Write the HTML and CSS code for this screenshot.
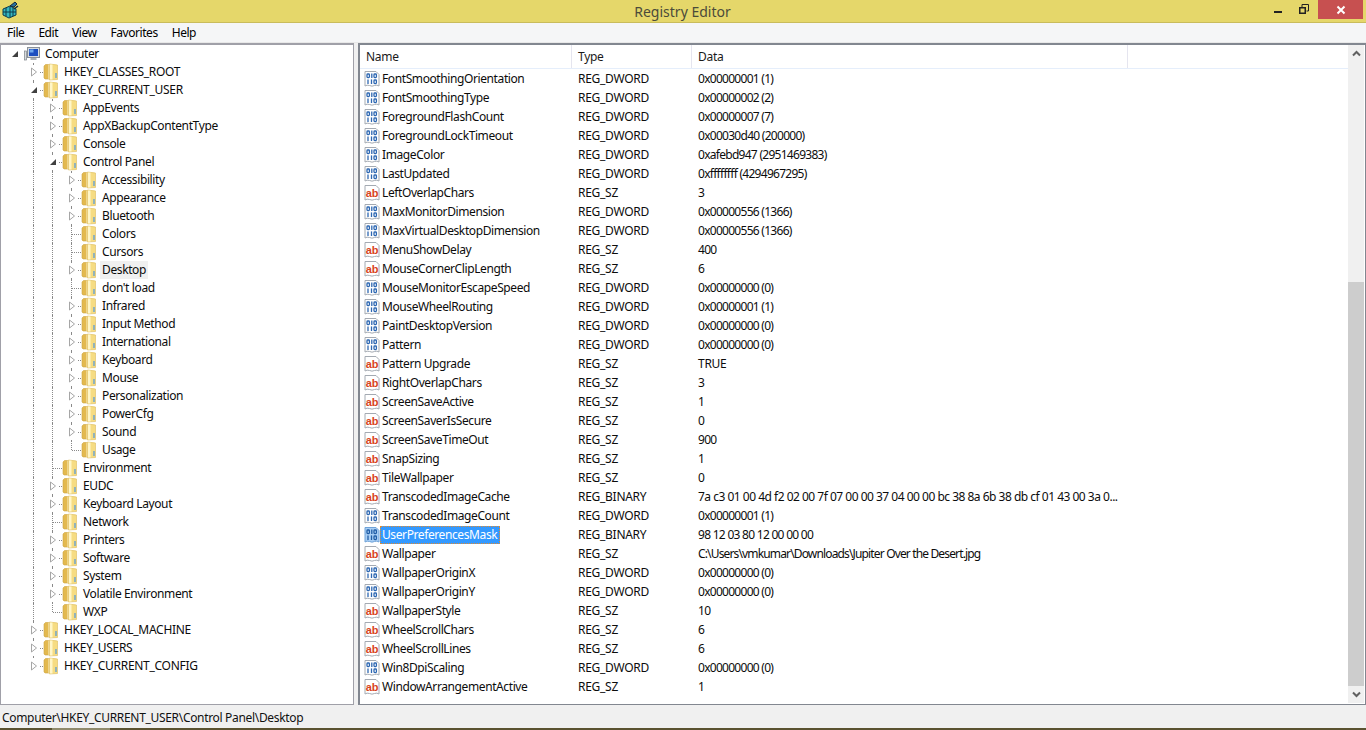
FILE: index.html
```html
<!DOCTYPE html>
<html lang="en">
<head>
<meta charset="utf-8">
<title>Registry Editor</title>
<link rel="stylesheet" href="styles.css">
</head>
<body>
<svg class="defs" width="0" height="0" aria-hidden="true">
  <symbol id="folder" viewBox="0 0 16 18">
    <path d="M1 3 L2.5 1.5 H6 V16 H2 L1 15 Z" fill="#e3b94f" stroke="#cfa543" stroke-width=".6"/>
    <path d="M5.5 1.5 L13.5 1 V15 L5.5 16 Z" fill="#fff7cf"/>
    <path d="M6.5 1 L14.5 2 V16.5 L6.5 17 Z" fill="#f6dc82" stroke="#dcbb5e" stroke-width=".6"/>
    <path d="M7 1.5 H9.5 V16.5 H7 Z" fill="#fff6c8"/>
    <path d="M13 10 v5" stroke="#4f97dc" stroke-width="1.2"/>
  </symbol>
  <symbol id="closed" viewBox="0 0 8 10"><path d="M1.5 1 L6.5 5 L1.5 9 Z" fill="#fff" stroke="#a6a6a6"/></symbol>
  <symbol id="open" viewBox="0 0 8 10"><path d="M7 2 V8 H1 Z" fill="#404040"/></symbol>
  <symbol id="bin" viewBox="0 0 16 16">
    <path d="M1 .5 H12 L15 3.5 V15 Q13 13.5 10.5 14.5 Q8 15.8 5.5 14.5 Q3 13.5 1 15 Z" fill="#fff" stroke="#a4aab2"/>
    <g fill="none" stroke="#2d67b2" stroke-width="1.3">
      <rect x="3" y="3" width="2.4" height="3.6" rx=".8"/><path d="M7.8 2.4 V7"/><rect x="10" y="3" width="2.4" height="3.6" rx=".8"/>
      <path d="M4 8.4 V13"/><path d="M7.5 8.4 V13"/><rect x="10" y="9" width="2.4" height="3.6" rx=".8"/>
    </g>
  </symbol>
  <symbol id="bin-sel" viewBox="0 0 16 16">
    <path d="M1 .5 H12 L15 3.5 V15 Q13 13.5 10.5 14.5 Q8 15.8 5.5 14.5 Q3 13.5 1 15 Z" fill="#a9cff5" stroke="#6ea2d8"/>
    <g fill="none" stroke="#1f5da6" stroke-width="1.3">
      <rect x="3" y="3" width="2.4" height="3.6" rx=".8"/><path d="M7.8 2.4 V7"/><rect x="10" y="3" width="2.4" height="3.6" rx=".8"/>
      <path d="M4 8.4 V13"/><path d="M7.5 8.4 V13"/><rect x="10" y="9" width="2.4" height="3.6" rx=".8"/>
    </g>
  </symbol>
  <symbol id="page" viewBox="0 0 16 16">
    <path d="M1 .5 H12 L15 3.5 V15 Q13 13.5 10.5 14.5 Q8 15.8 5.5 14.5 Q3 13.5 1 15 Z" fill="#fff" stroke="#a4aab2"/>
  </symbol>
</svg>

<div class="app">
  <header class="titlebar">
    <svg class="appicon" width="18" height="18" viewBox="0 0 18 18" aria-hidden="true">
      <path d="M2 8 L9 5 L15 8 V14 L8 17 L2 14 Z" fill="#35b6bf" stroke="#0c3a4c"/>
      <path d="M5 7 V15 M9 6 V16 M12 7 V15 M2 11 L15 11" stroke="#0c3a4c" fill="none"/>
      <path d="M9 5 L14 1 L16 3 L13 6 Z" fill="#2a6f9c" stroke="#10293c"/>
      <path d="M13 8 L17 5" stroke="#10293c" stroke-width="1.5"/>
    </svg>
    <h1 class="title">Registry Editor</h1>
    <div class="winbtns">
      <span class="min"></span>
      <svg class="restore" width="10" height="10" viewBox="0 0 10 10" aria-hidden="true"><path d="M3 3 V.5 H9.5 V7 H7.5" fill="none" stroke="#222"/><path d="M.75 3.75 H6.25 V9.25 H.75 Z" fill="none" stroke="#222" stroke-width="1.5"/></svg>
      <span class="close">
        <svg width="10" height="10" viewBox="0 0 10 10" aria-hidden="true"><path d="M1.5 1.5 L8.5 8.5 M8.5 1.5 L1.5 8.5" stroke="#fff" stroke-width="2"/></svg>
      </span>
    </div>
  </header>

  <nav class="menubar">
    <span>File</span><span>Edit</span><span>View</span><span>Favorites</span><span>Help</span>
  </nav>

  <main class="panes">
    <section class="tree">
      <div class="row root"><span class="tg"><svg><use href="#open"/></svg></span><span class="ic"><svg class="pc" width="16" height="16" viewBox="0 0 16 16"><rect x="3.5" y="1.5" width="12" height="10" fill="#d6dbe0" stroke="#8a9098"/><rect x="5" y="3" width="9" height="7" fill="#1d4fc0"/><path d="M5.5 3.5 h4 v3 h-4z" fill="#6fa8ee"/><rect x="6.5" y="12" width="6" height="2" fill="#aab0b6"/><rect x="0.5" y="5" width="2" height="9" fill="#d8dcdf" stroke="#7b8187" stroke-width=".7"/></svg></span><span class="tx">Computer</span></div>

      <div class="row"><i class="g"></i><span class="tg ln"><svg><use href="#closed"/></svg></span><span class="ic"><svg width="16" height="18"><use href="#folder"/></svg></span><span class="tx key">HKEY_CLASSES_ROOT</span></div>
      <div class="row"><i class="g"></i><span class="tg ln"><svg><use href="#open"/></svg></span><span class="ic"><svg width="16" height="18"><use href="#folder"/></svg></span><span class="tx key">HKEY_CURRENT_USER</span></div>

      <div class="row"><i class="g"></i><i class="g v"></i><span class="tg ln"><svg><use href="#closed"/></svg></span><span class="ic"><svg width="16" height="18"><use href="#folder"/></svg></span><span class="tx">AppEvents</span></div>
      <div class="row"><i class="g"></i><i class="g v"></i><span class="tg ln"><svg><use href="#closed"/></svg></span><span class="ic"><svg width="16" height="18"><use href="#folder"/></svg></span><span class="tx">AppXBackupContentType</span></div>
      <div class="row"><i class="g"></i><i class="g v"></i><span class="tg ln"><svg><use href="#closed"/></svg></span><span class="ic"><svg width="16" height="18"><use href="#folder"/></svg></span><span class="tx">Console</span></div>
      <div class="row"><i class="g"></i><i class="g v"></i><span class="tg ln"><svg><use href="#open"/></svg></span><span class="ic"><svg width="16" height="18"><use href="#folder"/></svg></span><span class="tx">Control Panel</span></div>

      <div class="row"><i class="g"></i><i class="g v"></i><i class="g v"></i><span class="tg ln"><svg><use href="#closed"/></svg></span><span class="ic"><svg width="16" height="18"><use href="#folder"/></svg></span><span class="tx">Accessibility</span></div>
      <div class="row"><i class="g"></i><i class="g v"></i><i class="g v"></i><span class="tg ln"><svg><use href="#closed"/></svg></span><span class="ic"><svg width="16" height="18"><use href="#folder"/></svg></span><span class="tx">Appearance</span></div>
      <div class="row"><i class="g"></i><i class="g v"></i><i class="g v"></i><span class="tg ln"><svg><use href="#closed"/></svg></span><span class="ic"><svg width="16" height="18"><use href="#folder"/></svg></span><span class="tx">Bluetooth</span></div>
      <div class="row"><i class="g"></i><i class="g v"></i><i class="g v"></i><span class="tg ln"></span><span class="ic"><svg width="16" height="18"><use href="#folder"/></svg></span><span class="tx">Colors</span></div>
      <div class="row"><i class="g"></i><i class="g v"></i><i class="g v"></i><span class="tg ln"></span><span class="ic"><svg width="16" height="18"><use href="#folder"/></svg></span><span class="tx">Cursors</span></div>
      <div class="row"><i class="g"></i><i class="g v"></i><i class="g v"></i><span class="tg ln"><svg><use href="#closed"/></svg></span><span class="ic"><svg width="16" height="18"><use href="#folder"/></svg></span><span class="tx cur">Desktop</span></div>
      <div class="row"><i class="g"></i><i class="g v"></i><i class="g v"></i><span class="tg ln"></span><span class="ic"><svg width="16" height="18"><use href="#folder"/></svg></span><span class="tx">don't load</span></div>
      <div class="row"><i class="g"></i><i class="g v"></i><i class="g v"></i><span class="tg ln"><svg><use href="#closed"/></svg></span><span class="ic"><svg width="16" height="18"><use href="#folder"/></svg></span><span class="tx">Infrared</span></div>
      <div class="row"><i class="g"></i><i class="g v"></i><i class="g v"></i><span class="tg ln"><svg><use href="#closed"/></svg></span><span class="ic"><svg width="16" height="18"><use href="#folder"/></svg></span><span class="tx">Input Method</span></div>
      <div class="row"><i class="g"></i><i class="g v"></i><i class="g v"></i><span class="tg ln"><svg><use href="#closed"/></svg></span><span class="ic"><svg width="16" height="18"><use href="#folder"/></svg></span><span class="tx">International</span></div>
      <div class="row"><i class="g"></i><i class="g v"></i><i class="g v"></i><span class="tg ln"><svg><use href="#closed"/></svg></span><span class="ic"><svg width="16" height="18"><use href="#folder"/></svg></span><span class="tx">Keyboard</span></div>
      <div class="row"><i class="g"></i><i class="g v"></i><i class="g v"></i><span class="tg ln"><svg><use href="#closed"/></svg></span><span class="ic"><svg width="16" height="18"><use href="#folder"/></svg></span><span class="tx">Mouse</span></div>
      <div class="row"><i class="g"></i><i class="g v"></i><i class="g v"></i><span class="tg ln"><svg><use href="#closed"/></svg></span><span class="ic"><svg width="16" height="18"><use href="#folder"/></svg></span><span class="tx">Personalization</span></div>
      <div class="row"><i class="g"></i><i class="g v"></i><i class="g v"></i><span class="tg ln"><svg><use href="#closed"/></svg></span><span class="ic"><svg width="16" height="18"><use href="#folder"/></svg></span><span class="tx">PowerCfg</span></div>
      <div class="row"><i class="g"></i><i class="g v"></i><i class="g v"></i><span class="tg ln"><svg><use href="#closed"/></svg></span><span class="ic"><svg width="16" height="18"><use href="#folder"/></svg></span><span class="tx">Sound</span></div>
      <div class="row"><i class="g"></i><i class="g v"></i><i class="g v"></i><span class="tg ln end"></span><span class="ic"><svg width="16" height="18"><use href="#folder"/></svg></span><span class="tx">Usage</span></div>

      <div class="row"><i class="g"></i><i class="g v"></i><span class="tg ln"></span><span class="ic"><svg width="16" height="18"><use href="#folder"/></svg></span><span class="tx">Environment</span></div>
      <div class="row"><i class="g"></i><i class="g v"></i><span class="tg ln"><svg><use href="#closed"/></svg></span><span class="ic"><svg width="16" height="18"><use href="#folder"/></svg></span><span class="tx">EUDC</span></div>
      <div class="row"><i class="g"></i><i class="g v"></i><span class="tg ln"><svg><use href="#closed"/></svg></span><span class="ic"><svg width="16" height="18"><use href="#folder"/></svg></span><span class="tx">Keyboard Layout</span></div>
      <div class="row"><i class="g"></i><i class="g v"></i><span class="tg ln"></span><span class="ic"><svg width="16" height="18"><use href="#folder"/></svg></span><span class="tx">Network</span></div>
      <div class="row"><i class="g"></i><i class="g v"></i><span class="tg ln"><svg><use href="#closed"/></svg></span><span class="ic"><svg width="16" height="18"><use href="#folder"/></svg></span><span class="tx">Printers</span></div>
      <div class="row"><i class="g"></i><i class="g v"></i><span class="tg ln"><svg><use href="#closed"/></svg></span><span class="ic"><svg width="16" height="18"><use href="#folder"/></svg></span><span class="tx">Software</span></div>
      <div class="row"><i class="g"></i><i class="g v"></i><span class="tg ln"><svg><use href="#closed"/></svg></span><span class="ic"><svg width="16" height="18"><use href="#folder"/></svg></span><span class="tx">System</span></div>
      <div class="row"><i class="g"></i><i class="g v"></i><span class="tg ln"><svg><use href="#closed"/></svg></span><span class="ic"><svg width="16" height="18"><use href="#folder"/></svg></span><span class="tx">Volatile Environment</span></div>
      <div class="row"><i class="g"></i><i class="g v"></i><span class="tg ln end"></span><span class="ic"><svg width="16" height="18"><use href="#folder"/></svg></span><span class="tx">WXP</span></div>

      <div class="row"><i class="g"></i><span class="tg ln"><svg><use href="#closed"/></svg></span><span class="ic"><svg width="16" height="18"><use href="#folder"/></svg></span><span class="tx key">HKEY_LOCAL_MACHINE</span></div>
      <div class="row"><i class="g"></i><span class="tg ln"><svg><use href="#closed"/></svg></span><span class="ic"><svg width="16" height="18"><use href="#folder"/></svg></span><span class="tx key">HKEY_USERS</span></div>
      <div class="row"><i class="g"></i><span class="tg ln end"><svg><use href="#closed"/></svg></span><span class="ic"><svg width="16" height="18"><use href="#folder"/></svg></span><span class="tx key">HKEY_CURRENT_CONFIG</span></div>
    </section>

    <section class="list">
      <div class="listbody">
        <div class="lhead"><span class="c1">Name</span><span class="c2">Type</span><span class="c3">Data</span></div>
        <div class="lrow"><svg class="vi"><use href="#bin"/></svg><span class="n">FontSmoothingOrientation</span><span class="t">REG_DWORD</span><span class="d">0x00000001 (1)</span></div>
        <div class="lrow"><svg class="vi"><use href="#bin"/></svg><span class="n">FontSmoothingType</span><span class="t">REG_DWORD</span><span class="d">0x00000002 (2)</span></div>
        <div class="lrow"><svg class="vi"><use href="#bin"/></svg><span class="n">ForegroundFlashCount</span><span class="t">REG_DWORD</span><span class="d">0x00000007 (7)</span></div>
        <div class="lrow"><svg class="vi"><use href="#bin"/></svg><span class="n">ForegroundLockTimeout</span><span class="t">REG_DWORD</span><span class="d">0x00030d40 (200000)</span></div>
        <div class="lrow"><svg class="vi"><use href="#bin"/></svg><span class="n">ImageColor</span><span class="t">REG_DWORD</span><span class="d">0xafebd947 (2951469383)</span></div>
        <div class="lrow"><svg class="vi"><use href="#bin"/></svg><span class="n">LastUpdated</span><span class="t">REG_DWORD</span><span class="d">0xffffffff (4294967295)</span></div>
        <div class="lrow"><span class="vs"><svg class="vi"><use href="#page"/></svg><b class="ab">ab</b></span><span class="n">LeftOverlapChars</span><span class="t">REG_SZ</span><span class="d">3</span></div>
        <div class="lrow"><svg class="vi"><use href="#bin"/></svg><span class="n">MaxMonitorDimension</span><span class="t">REG_DWORD</span><span class="d">0x00000556 (1366)</span></div>
        <div class="lrow"><svg class="vi"><use href="#bin"/></svg><span class="n">MaxVirtualDesktopDimension</span><span class="t">REG_DWORD</span><span class="d">0x00000556 (1366)</span></div>
        <div class="lrow"><span class="vs"><svg class="vi"><use href="#page"/></svg><b class="ab">ab</b></span><span class="n">MenuShowDelay</span><span class="t">REG_SZ</span><span class="d">400</span></div>
        <div class="lrow"><span class="vs"><svg class="vi"><use href="#page"/></svg><b class="ab">ab</b></span><span class="n">MouseCornerClipLength</span><span class="t">REG_SZ</span><span class="d">6</span></div>
        <div class="lrow"><svg class="vi"><use href="#bin"/></svg><span class="n">MouseMonitorEscapeSpeed</span><span class="t">REG_DWORD</span><span class="d">0x00000000 (0)</span></div>
        <div class="lrow"><svg class="vi"><use href="#bin"/></svg><span class="n">MouseWheelRouting</span><span class="t">REG_DWORD</span><span class="d">0x00000001 (1)</span></div>
        <div class="lrow"><svg class="vi"><use href="#bin"/></svg><span class="n">PaintDesktopVersion</span><span class="t">REG_DWORD</span><span class="d">0x00000000 (0)</span></div>
        <div class="lrow"><svg class="vi"><use href="#bin"/></svg><span class="n">Pattern</span><span class="t">REG_DWORD</span><span class="d">0x00000000 (0)</span></div>
        <div class="lrow"><span class="vs"><svg class="vi"><use href="#page"/></svg><b class="ab">ab</b></span><span class="n">Pattern Upgrade</span><span class="t">REG_SZ</span><span class="d txt">TRUE</span></div>
        <div class="lrow"><span class="vs"><svg class="vi"><use href="#page"/></svg><b class="ab">ab</b></span><span class="n">RightOverlapChars</span><span class="t">REG_SZ</span><span class="d">3</span></div>
        <div class="lrow"><span class="vs"><svg class="vi"><use href="#page"/></svg><b class="ab">ab</b></span><span class="n">ScreenSaveActive</span><span class="t">REG_SZ</span><span class="d">1</span></div>
        <div class="lrow"><span class="vs"><svg class="vi"><use href="#page"/></svg><b class="ab">ab</b></span><span class="n">ScreenSaverIsSecure</span><span class="t">REG_SZ</span><span class="d">0</span></div>
        <div class="lrow"><span class="vs"><svg class="vi"><use href="#page"/></svg><b class="ab">ab</b></span><span class="n">ScreenSaveTimeOut</span><span class="t">REG_SZ</span><span class="d">900</span></div>
        <div class="lrow"><span class="vs"><svg class="vi"><use href="#page"/></svg><b class="ab">ab</b></span><span class="n">SnapSizing</span><span class="t">REG_SZ</span><span class="d">1</span></div>
        <div class="lrow"><span class="vs"><svg class="vi"><use href="#page"/></svg><b class="ab">ab</b></span><span class="n">TileWallpaper</span><span class="t">REG_SZ</span><span class="d">0</span></div>
        <div class="lrow"><span class="vs"><svg class="vi"><use href="#page"/></svg><b class="ab">ab</b></span><span class="n">TranscodedImageCache</span><span class="t">REG_BINARY</span><span class="d long">7a c3 01 00 4d f2 02 00 7f 07 00 00 37 04 00 00 bc 38 8a 6b 38 db cf 01 43 00 3a 0...</span></div>
        <div class="lrow"><svg class="vi"><use href="#bin"/></svg><span class="n">TranscodedImageCount</span><span class="t">REG_DWORD</span><span class="d">0x00000001 (1)</span></div>
        <div class="lrow"><svg class="vi"><use href="#bin-sel"/></svg><span class="n"><b class="sel">UserPreferencesMask</b></span><span class="t">REG_BINARY</span><span class="d">98 12 03 80 12 00 00 00</span></div>
        <div class="lrow"><span class="vs"><svg class="vi"><use href="#page"/></svg><b class="ab">ab</b></span><span class="n">Wallpaper</span><span class="t">REG_SZ</span><span class="d path">C:\Users\vmkumar\Downloads\Jupiter Over the Desert.jpg</span></div>
        <div class="lrow"><svg class="vi"><use href="#bin"/></svg><span class="n">WallpaperOriginX</span><span class="t">REG_DWORD</span><span class="d">0x00000000 (0)</span></div>
        <div class="lrow"><svg class="vi"><use href="#bin"/></svg><span class="n">WallpaperOriginY</span><span class="t">REG_DWORD</span><span class="d">0x00000000 (0)</span></div>
        <div class="lrow"><span class="vs"><svg class="vi"><use href="#page"/></svg><b class="ab">ab</b></span><span class="n">WallpaperStyle</span><span class="t">REG_SZ</span><span class="d">10</span></div>
        <div class="lrow"><span class="vs"><svg class="vi"><use href="#page"/></svg><b class="ab">ab</b></span><span class="n">WheelScrollChars</span><span class="t">REG_SZ</span><span class="d">6</span></div>
        <div class="lrow"><span class="vs"><svg class="vi"><use href="#page"/></svg><b class="ab">ab</b></span><span class="n">WheelScrollLines</span><span class="t">REG_SZ</span><span class="d">6</span></div>
        <div class="lrow"><svg class="vi"><use href="#bin"/></svg><span class="n">Win8DpiScaling</span><span class="t">REG_DWORD</span><span class="d">0x00000000 (0)</span></div>
        <div class="lrow"><span class="vs"><svg class="vi"><use href="#page"/></svg><b class="ab">ab</b></span><span class="n">WindowArrangementActive</span><span class="t">REG_SZ</span><span class="d">1</span></div>
      </div>
      <div class="scroll">
        <span class="sbtn"><svg width="9" height="7" viewBox="0 0 9 7"><path d="M1 5.5 L4.5 2 L8 5.5" fill="none" stroke="#606060" stroke-width="2"/></svg></span>
        <div class="track"><div class="thumb"></div></div>
        <span class="sbtn"><svg width="9" height="7" viewBox="0 0 9 7"><path d="M1 1.5 L4.5 5 L8 1.5" fill="none" stroke="#606060" stroke-width="2"/></svg></span>
      </div>
    </section>
  </main>

  <footer class="status">Computer\HKEY_CURRENT_USER\Control Panel\Desktop</footer>
  <div class="strip"></div>
</div>
</body>
</html>
```
FILE: styles.css
```css
* { box-sizing: border-box; }
html, body { margin: 0; height: 100%; overflow: hidden; }
body { font: 12px/18px "Noto Sans", "Open Sans", sans-serif; letter-spacing: -0.28px; color: #000; background: #f0f0f0; }
.defs { display: block; height: 0; }
.app { width: 1366px; height: 730px; display: flex; flex-direction: column; }

.titlebar { height: 23px; background: #e5d76a; border-bottom: 1px solid #c9bc5c; display: flex; align-items: flex-start; padding-left: 1px; position: relative; }
.appicon { margin-top: 1px; }
.title { flex: 1; margin: 0; font: 400 14px/23px "Noto Sans", sans-serif; letter-spacing: 0; color: #4b4b3a; text-align: center; padding-right: 20px; }
.winbtns { position: absolute; top: 0; right: 3px; display: flex; height: 19px; }
.min { width: 8px; height: 2px; background: #222; margin: 11px 17px 0 0; }
.restore { margin: 4px 9px 0 0; display: block; }
.close { width: 45px; background: #c75050; display: flex; align-items: center; justify-content: center; }

.menubar { height: 20px; background: #f5f6f7; border-bottom: 1px solid #e8e8e8; display: flex; gap: 14px; padding-left: 7px; line-height: 19px; letter-spacing: -0.45px; }

.panes { height: 662px; display: flex; gap: 4px; }
.tree { width: 354px; background: #fff; border: 1px solid #a0a0a8; border-top-width: 2px; overflow: hidden; }
.list { flex: 1; background: #fff; border: 1px solid #828790; border-width: 2px 1px 1px 2px; display: flex; }

.row { height: 18px; display: flex; padding-left: 4px; white-space: nowrap; color: #0c0c0c; }
.g { width: 19px; flex: none; position: relative; }
.g.v::before, .tg.ln::before { content: ""; position: absolute; left: 9px; top: 0; bottom: 0; border-left: 1px dotted #8a8a8a; }
.tg { width: 19px; flex: none; position: relative; display: flex; align-items: center; justify-content: center; }
.tg.ln::after { content: ""; position: absolute; left: 10px; right: 0; top: 9px; border-top: 1px dotted #8a8a8a; }
.tg.end::before { bottom: 9px; }
.tg svg { width: 8px; height: 10px; position: relative; z-index: 1; background: #fff; box-shadow: 0 0 0 2px #fff; }
.ic { width: 21px; flex: none; display: flex; align-items: center; }
.ic svg { display: block; }
.tx { letter-spacing: -0.38px; }
.key { letter-spacing: -0.28px; }
.cur { background: #f0f0f0; padding: 0 2px; margin-left: -2px; }

.listbody { flex: 1; min-width: 0; }
.lhead { height: 24px; display: flex; border-bottom: 1px solid #e5eefb; line-height: 24px; color: #1a1a1a; }
.lhead span { border-right: 1px solid #e5e5ef; padding-left: 6px; flex: none; }
.c1 { width: 212px; }
.c2 { width: 120px; }
.c3 { width: 436px; }
.lrow { height: 19px; display: flex; align-items: center; white-space: nowrap; padding-left: 4px; color: #0c0c0c; }
.vi { width: 16px; height: 16px; flex: none; display: block; }
.vs { width: 16px; height: 16px; flex: none; position: relative; }
.ab { position: absolute; left: 1px; top: 2px; width: 14px; text-align: center; font: 700 11px/12px "Liberation Sans", sans-serif; letter-spacing: -0.2px; color: #d8431c; }
.n { width: 198px; flex: none; height: 18px; padding-left: 2px; letter-spacing: -0.4px; }
.sel { display: inline-block; font-weight: 400; height: 18px; background: #3399ff; color: #fff; outline: 1px dotted #e08a30; outline-offset: -1px; margin-left: -2px; padding: 0 3px 0 2px; }
.t { width: 120px; flex: none; }
.d { flex: none; letter-spacing: -0.72px; }
.d.txt { letter-spacing: -0.28px; }
.d.long { letter-spacing: -0.5px; }
.d.path { letter-spacing: -0.85px; }

.scroll { width: 16px; background: #f0f0f0; margin: 0 1px 1px 0; display: flex; flex-direction: column; }
.sbtn { height: 17px; display: flex; align-items: center; justify-content: center; flex: none; }
.track { flex: 1; padding-top: 220px; display: flex; }
.thumb { flex: 1; background: #cdcdcd; }

.status { height: 23px; background: #f0f0f0; line-height: 24px; padding: 1px 0 0 2px; color: #111; letter-spacing: -0.32px; }
.strip { height: 2px; background: linear-gradient(to right, #5a5230 52px, #8f8a6c 52px, #8f8a6c 110px, #5a5230 110px); }
```
